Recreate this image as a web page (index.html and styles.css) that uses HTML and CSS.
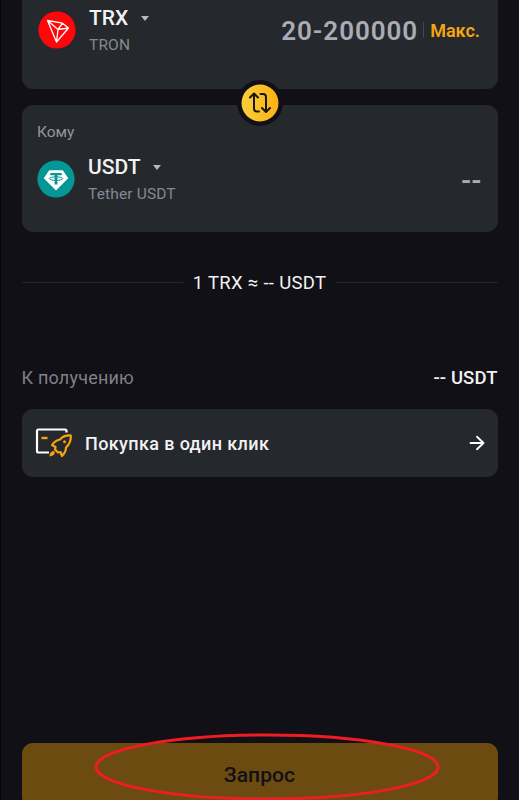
FILE: index.html
```
<!DOCTYPE html>
<html lang="ru">
<head>
  <meta charset="UTF-8">
  <title>Конвертация</title>
  <link rel="stylesheet" href="styles.css">
</head>
<body>
  <main class="screen">
    <section class="card card-from">
      <div class="coin">
        <svg class="coin-logo" viewBox="0 0 38 38">
          <circle cx="19" cy="19" r="18.6" fill="#ff060a"/>
          <path d="M9.5 9.5L24.5 12.2L30.5 17L18.5 31ZM9.5 9.5L20 18.5L30.5 17M24.5 12.2L20 18.5L18.5 31" fill="none" stroke="#fff" stroke-width="1.3" stroke-linejoin="round"/>
        </svg>
        <div class="coin-info">
          <div class="coin-symbol">TRX<span class="caret"></span></div>
          <div class="coin-name">TRON</div>
        </div>
      </div>
      <div class="amount">
        <span class="amount-range">20-200000</span>
        <span class="amount-divider"></span>
        <span class="amount-max">Макс.</span>
      </div>
      <div class="swap">
        <svg viewBox="0 0 38 38" width="38" height="38">
          <defs>
            <linearGradient id="gold" x1="0" x2="1">
              <stop offset="0" stop-color="#f8cf3c"/>
              <stop offset="1" stop-color="#fcb112"/>
            </linearGradient>
          </defs>
          <circle cx="19" cy="19" r="18.5" fill="url(#gold)"/>
          <path d="M9 13.5L13 9.5L17 13.5M13 10V24.5Q13 27.5 16 27.5H18M19.5 10H22Q25 10 25 13V27.5M21 24L25 28L29 24" fill="none" stroke="#1a1710" stroke-width="2" stroke-linecap="round" stroke-linejoin="round"/>
        </svg>
      </div>
    </section>

    <section class="card card-to">
      <div class="card-label">Кому</div>
      <div class="card-row">
        <div class="coin">
          <svg class="coin-logo" viewBox="0 0 38 38">
            <circle cx="19" cy="19" r="18.6" fill="#049795"/>
            <path d="M12.2 10.2H25.8L31.2 18.3L19 30.5L6.8 18.3Z" fill="#fff"/>
            <path d="M13.3 13H24.7V15.3H20.4V24.5H17.6V15.3H13.3Z" fill="#049795"/>
            <ellipse cx="19" cy="18.6" rx="6.7" ry="1.8" fill="none" stroke="#049795"/>
          </svg>
          <div class="coin-info">
            <div class="coin-symbol">USDT<span class="caret"></span></div>
            <div class="coin-name">Tether USDT</div>
          </div>
        </div>
        <div class="amount-empty">--</div>
      </div>
    </section>

    <div class="rate">1 TRX ≈ -- USDT</div>

    <div class="receive">
      <span class="receive-label">К получению</span>
      <span class="receive-value">-- USDT</span>
    </div>

    <a class="one-click" href="#">
      <svg class="one-click-icon" viewBox="0 0 38 32">
        <path d="M31.5 5.5V4Q31.5 2.5 30 2.5H3.5Q2 2.5 2 4V24Q2 25.5 3.5 25.5H14" fill="none" stroke="#fff" stroke-width="2.2"/>
        <path d="M6.5 11H12.5" stroke="#f8a40c" stroke-width="2.4"/>
        <path d="M35.8 8.5Q29 8 25 12.5Q20 13.5 17 18L20.5 20L20 22.5L23 25.5L25.5 25L27 29Q31 25 31 20.5Q36.3 15.5 35.8 8.5Z" fill="none" stroke="#f8a40c" stroke-width="2.2" stroke-linejoin="round"/>
        <circle cx="29.5" cy="14.8" r="1.5" fill="#f8a40c"/>
        <path d="M14.5 29.5Q14.5 24 19.5 24Q21 28.5 14.5 29.5Z" fill="#f8a40c"/>
      </svg>
      <span class="one-click-text">Покупка в один клик</span>
      <svg class="arrow" viewBox="0 0 16 16">
        <path d="M1.5 8H14.5M8 1.8L14.5 8L8 14.2" fill="none" stroke="#fff" stroke-width="1.9" stroke-linecap="round" stroke-linejoin="round"/>
      </svg>
    </a>

    <button class="submit">Запрос
      <svg class="marker" viewBox="0 0 346 68">
        <ellipse cx="173" cy="34" rx="171" ry="32" fill="none" stroke="#f01c24" stroke-width="3"/>
      </svg>
    </button>
  </main>
</body>
</html>
```
FILE: styles.css
```
* {
  box-sizing: border-box;
}
body {
  margin: 0;
  background: #111016;
  color: #f2f2f2;
  font-family: Roboto, "Noto Sans", sans-serif;
}
.screen {
  height: 800px;
  padding: 0 21.5px 0 20.5px;
  border-left: 1px solid #08080b;
  overflow: hidden;
  display: flex;
  flex-direction: column;
}
.card,
.one-click {
  flex: none;
  background: #25282d;
  border-radius: 11px;
}
.card-from {
  position: relative;
  height: 89.4px;
  border-radius: 0 0 11px 11px;
  display: flex;
  justify-content: space-between;
  align-items: flex-start;
  padding: 5px 17.5px 0 16.5px;
}
.coin {
  display: flex;
  align-items: center;
  gap: 13px;
}
.coin-logo {
  width: 38px;
  height: 38px;
  margin-top: -2px;
}
.coin-symbol {
  display: flex;
  align-items: center;
  height: 26px;
  font-size: 21px;
  font-weight: 500;
}
.coin-name {
  height: 26px;
  line-height: 28px;
  font-size: 15.5px;
  color: #868990;
  letter-spacing: 0.15px;
}
.caret {
  margin-left: 13px;
  border: 4px solid transparent;
  border-top: 5px solid #b4b8c0;
  border-bottom: 0;
}
.amount {
  display: flex;
  align-items: center;
  height: 50px;
}
.amount-range {
  margin-top: 2px;
  font-size: 26px;
  font-weight: 600;
  letter-spacing: 0.95px;
  color: #a9acb5;
}
.amount-divider {
  width: 1px;
  height: 16px;
  margin: 0 6px 0 5px;
  background: #44474c;
}
.amount-max {
  font-size: 18px;
  font-weight: 600;
  color: #f5a60d;
}
.swap {
  position: absolute;
  left: 215px;
  top: 79.5px;
  z-index: 1;
  width: 46px;
  height: 46px;
  padding: 4px;
  border-radius: 50%;
  background: #111016;
}
.swap svg {
  display: block;
}
.card-to {
  height: 126.5px;
  margin-top: 16px;
  padding: 15px 16px 0 15.5px;
}
.card-label {
  height: 24px;
  line-height: 24px;
  font-size: 15.5px;
  color: #94969c;
}
.card-row {
  display: flex;
  justify-content: space-between;
  align-items: center;
  padding-top: 10px;
}
.amount-empty {
  font-size: 28px;
  font-weight: 600;
  color: #a9acb5;
}
.rate {
  flex: none;
  display: flex;
  align-items: center;
  gap: 10px;
  height: 30px;
  margin-top: 36px;
  font-size: 18.5px;
  letter-spacing: 0.3px;
}
.rate::before,
.rate::after {
  content: "";
  flex: 1;
  height: 1px;
  background: #25262c;
}
.receive {
  flex: none;
  display: flex;
  justify-content: space-between;
  align-items: center;
  height: 30px;
  margin-top: 65px;
  font-size: 18.5px;
}
.receive-label {
  font-size: 18px;
  color: #808187;
  letter-spacing: 0.2px;
}
.receive-value {
  font-weight: 500;
  letter-spacing: 0.1px;
}
.one-click {
  display: flex;
  align-items: center;
  height: 68px;
  margin-top: 16px;
  padding: 0 13px 0 13.5px;
  color: #f2f2f2;
  font-size: 18px;
  font-weight: 500;
  letter-spacing: 0.38px;
  text-decoration: none;
}
.one-click-icon {
  width: 38px;
  height: 32px;
  margin-right: 12px;
}
.one-click-text {
  padding-top: 1px;
}
.arrow {
  width: 16px;
  height: 16px;
  margin-left: auto;
}
.submit {
  position: relative;
  flex: none;
  height: 65px;
  margin-top: 266px;
  padding: 0;
  border: 0;
  border-radius: 11px;
  background: #6b4b10;
  color: #111016;
  font: 500 21px Roboto, "Noto Sans", sans-serif;
  letter-spacing: 0.1px;
}
.marker {
  position: absolute;
  left: 72px;
  top: -10px;
  width: 346px;
  height: 68px;
}
```
